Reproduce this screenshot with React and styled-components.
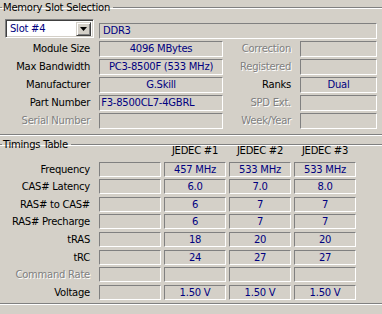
import React from 'react';
import styled, { createGlobalStyle } from 'styled-components';

const Global = createGlobalStyle`
  html, body { margin: 0; padding: 0; background: #d4d0c8; }
  body { font-family: "DejaVu Sans", sans-serif; font-size: 10px; letter-spacing: -0.25px; }
`;

const Page = styled.div`
  width: 382px;
  height: 314px;
  overflow: hidden;
  background: #d4d0c8;
  color: #000;
  padding-top: 1px;
  box-sizing: border-box;
`;

const Group = styled.fieldset`
  margin: ${p => p.$mt || 0}px -12px 0 -8px;
  padding: ${p => p.$pt}px 12px ${p => p.$pb}px 7px;
  border: 1px solid #808080;
  box-shadow: inset 1px 1px 0 #fff, 1px 1px 0 #fff;
  min-width: 0;
`;

const Legend = styled.legend`
  margin-left: 2px;
  padding: 0 3px 0 1px;
  height: 13px;
  line-height: 13px;
`;

const TopRow = styled.div`
  display: flex;
  align-items: flex-end;
  height: 21px;
`;

const Combo = styled.div`
  box-sizing: border-box;
  margin: 1px 0 1px 5px;
  width: 89px;
  height: 19px;
  background: #fff;
  border: 1px solid;
  border-color: #808080 #fff #fff #808080;
  box-shadow: inset 1px 1px 0 #404040, inset -1px -1px 0 #d4d0c8;
  display: flex;
  align-items: center;
  padding: 0 2px 0 4px;
  color: #000080;
`;

const ComboText = styled.span`
  flex: 1;
`;

const DropButton = styled.div`
  box-sizing: border-box;
  width: 15px;
  height: 14px;
  background: #d4d0c8;
  border: 1px solid;
  border-color: #d4d0c8 #404040 #404040 #d4d0c8;
  box-shadow: inset 1px 1px 0 #fff, inset -1px -1px 0 #808080;
  display: flex;
  align-items: center;
  justify-content: center;
`;

const Field = styled.div`
  box-sizing: border-box;
  height: ${p => p.$h || 16}px;
  border: 1px solid;
  border-color: #808080 #fff #fff #808080;
  color: #000080;
  white-space: pre;
  overflow: hidden;
  line-height: ${p => (p.$h || 16) - 2}px;
  text-align: ${p => p.$align || 'center'};
  padding: 0 ${p => p.$px || 0}px;
`;

const TypeField = styled(Field)`
  margin-left: 5px;
  width: 278px;
`;

const InfoGrid = styled.div`
  margin-top: 2px;
  display: grid;
  grid-template-columns: 99px 124px 77px 77px;
  grid-auto-rows: 16px;
  row-gap: 2px;
`;

const Label = styled.div`
  text-align: right;
  padding-right: ${p => p.$pr || 9}px;
  line-height: ${p => p.$lh || 16}px;
  white-space: nowrap;
  color: ${p => (p.$disabled ? '#808080' : '#000')};
  text-shadow: ${p => (p.$disabled ? '1px 1px 0 #fff' : 'none')};
`;

const TimingGrid = styled.div`
  margin-top: -7px;
  display: grid;
  grid-template-columns: 96px repeat(4, 62px);
  grid-template-rows: 15px;
  grid-auto-rows: 15px;
  column-gap: 3px;
  row-gap: 2.6px;
`;

const Header = styled.div`
  text-align: center;
  line-height: 14px;
  white-space: nowrap;
`;

const info = [
  ['Module Size', '4096 MBytes', 'Correction', '', false, true],
  ['Max Bandwidth', 'PC3-8500F (533 MHz)', 'Registered', '', false, true],
  ['Manufacturer', 'G.Skill', 'Ranks', 'Dual', false, false],
  ['Part Number', 'F3-8500CL7-4GBRL         ', 'SPD Ext.', '', false, true],
  ['Serial Number', '', 'Week/Year', '', true, true],
];

const timings = [
  ['Frequency', ['', '457 MHz', '533 MHz', '533 MHz']],
  ['CAS# Latency', ['', '6.0', '7.0', '8.0']],
  ['RAS# to CAS#', ['', '6', '7', '7']],
  ['RAS# Precharge', ['', '6', '7', '7']],
  ['tRAS', ['', '18', '20', '20']],
  ['tRC', ['', '24', '27', '27']],
  ['Command Rate', ['', '', '', ''], true],
  ['Voltage', ['', '1.50 V', '1.50 V', '1.50 V']],
];

export default function App() {
  return (
    <Page>
      <Global />
      <Group $pt={4} $pb={5}>
        <Legend>Memory Slot Selection</Legend>
        <TopRow>
          <Combo>
            <ComboText>Slot #4</ComboText>
            <DropButton>
              <svg width="7" height="4" viewBox="0 0 7 4">
                <path d="M0 0H7L3.5 4Z" fill="#000" />
              </svg>
            </DropButton>
          </Combo>
          <TypeField $align="left" $px={3}>DDR3</TypeField>
        </TopRow>
        <InfoGrid>
          {info.map(([l1, v1, l2, v2, d1, d2]) => (
            <React.Fragment key={l1}>
              <Label $disabled={d1}>{l1}</Label>
              <Field>{v1}</Field>
              <Label $disabled={d2}>{l2}</Label>
              <Field>{v2}</Field>
            </React.Fragment>
          ))}
        </InfoGrid>
      </Group>
      <Group $mt={3} $pt={0} $pb={3}>
        <Legend>Timings Table</Legend>
        <TimingGrid>
          <div />
          <Header />
          <Header>JEDEC #1</Header>
          <Header>JEDEC #2</Header>
          <Header>JEDEC #3</Header>
          {timings.map(([label, vals, dis]) => (
            <React.Fragment key={label}>
              <Label $pr={6} $lh={15} $disabled={dis}>{label}</Label>
              {vals.map((v, i) => (
                <Field key={i} $h={15}>{v}</Field>
              ))}
            </React.Fragment>
          ))}
        </TimingGrid>
      </Group>
    </Page>
  );
}
